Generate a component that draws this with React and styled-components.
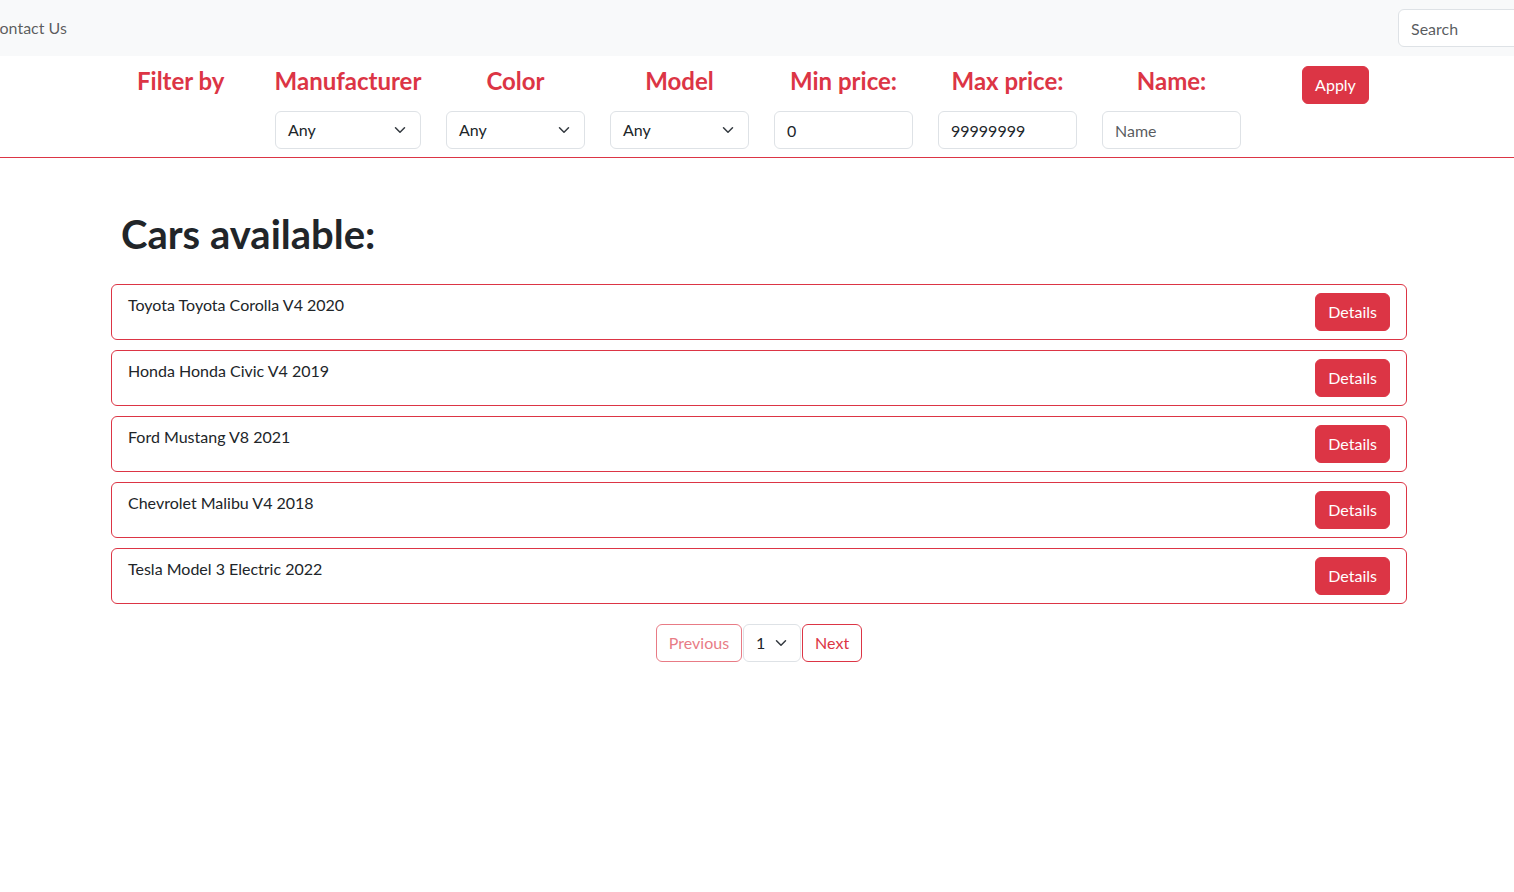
import React from "react";
import styled, { createGlobalStyle } from "styled-components";

const GlobalStyle = createGlobalStyle`
  * {
    box-sizing: border-box;
  }

  body {
    margin: 0;
    overflow: hidden;
    background: #ffffff;
    color: #212529;
    font-family: Lato, "Liberation Sans", sans-serif;
    font-size: 16px;
    line-height: 1.5;
  }
`;

const red = "#dc3545";

const NavBar = styled.nav`
  display: flex;
  align-items: center;
  justify-content: space-between;

  height: 56px;

  background: #f8f9fa;
`;

const NavLink = styled.a`
  margin-left: -11px;

  color: rgba(0, 0, 0, 0.65);
  font-size: 16px;
  text-decoration: none;
`;

const SearchInput = styled.input`
  width: 220px;
  height: 38px;
  margin-right: -104px;
  padding: 6px 12px;

  color: #212529;
  font: inherit;

  border: 1px solid #dee2e6;
  border-radius: 6px;
  background: #ffffff;

  &::placeholder {
    color: rgba(33, 37, 41, 0.75);
  }
`;

const FilterBar = styled.form`
  display: flex;
  align-items: flex-start;
  gap: 25px;

  padding: 10px 0 8px 137px;

  border-bottom: 1px solid ${red};
`;

const FilterColumn = styled.div`
  display: flex;
  flex-direction: column;
  align-items: ${({ $align }) => $align || "center"};
  gap: 16px;

  width: ${({ $width }) => $width}px;
`;

const FilterLabel = styled.h4`
  margin: 0;

  color: ${red};
  font-size: 24px;
  font-weight: 700;
  line-height: 29px;
  white-space: nowrap;
`;

const SelectBox = styled.div`
  display: flex;
  align-items: center;
  justify-content: space-between;

  width: 100%;
  height: 38px;
  padding: 0 12px;

  color: #212529;
  font-size: 16px;

  border: 1px solid #dee2e6;
  border-radius: 6px;
  background: #ffffff;

  svg {
    flex: 0 0 auto;
    width: 16px;
    height: 12px;
  }
`;

const TextInput = styled.input`
  width: 100%;
  height: 38px;
  padding: 6px 12px;

  color: #212529;
  font: inherit;

  border: 1px solid #dee2e6;
  border-radius: 6px;
  background: #ffffff;

  &::placeholder {
    color: rgba(33, 37, 41, 0.75);
  }
`;

const SolidButton = styled.button`
  height: 38px;
  padding: 0 12px;

  color: #ffffff;
  font: inherit;
  font-size: 16px;

  border: 1px solid ${red};
  border-radius: 6px;
  background: ${red};
  cursor: pointer;
`;

const Main = styled.main`
  width: 1296px;
  margin-left: 111px;
  padding-top: 52px;
`;

const PageTitle = styled.h1`
  margin: 0 0 26px 10px;

  color: #212529;
  font-size: 40px;
  font-weight: 700;
  line-height: 48px;
`;

const CarList = styled.div`
  display: grid;
  gap: 10px;
`;

const CarCard = styled.div`
  display: flex;
  align-items: flex-start;
  justify-content: space-between;

  height: 56px;
  padding: 8px 16px;

  border: 1px solid ${red};
  border-radius: 6px;
`;

const CarName = styled.span`
  color: #212529;
  font-size: 16px;
  line-height: 24px;
`;

const Pagination = styled.div`
  display: flex;
  justify-content: center;

  margin-top: 20px;
`;

const OutlineButton = styled.button`
  height: 38px;
  padding: 0 12px;

  color: ${red};
  font: inherit;
  font-size: 16px;

  border: 1px solid ${red};
  border-radius: 6px;
  background: transparent;
  opacity: ${({ disabled }) => (disabled ? 0.65 : 1)};
`;

const PageSelect = styled(SelectBox)`
  width: 58px;
  gap: 8px;
  margin: 0 1px;
`;

const Chevron = () => (
  <svg viewBox="0 0 16 16" aria-hidden="true">
    <path
      d="M2 5l6 6 6-6"
      fill="none"
      stroke="#343a40"
      strokeWidth="2"
      strokeLinecap="round"
      strokeLinejoin="round"
    />
  </svg>
);

const filters = [
  { label: "Manufacturer", width: 146, type: "select", value: "Any" },
  { label: "Color", width: 139, type: "select", value: "Any" },
  { label: "Model", width: 139, type: "select", value: "Any" },
  { label: "Min price:", width: 139, type: "input", value: "0" },
  { label: "Max price:", width: 139, type: "input", value: "99999999" },
  { label: "Name:", width: 139, type: "input", placeholder: "Name" },
];

const cars = [
  "Toyota Toyota Corolla V4 2020",
  "Honda Honda Civic V4 2019",
  "Ford Mustang V8 2021",
  "Chevrolet Malibu V4 2018",
  "Tesla Model 3 Electric 2022",
];

export default function App() {
  return (
    <>
      <GlobalStyle />

      <NavBar>
        <NavLink href="#">Contact Us</NavLink>
        <SearchInput type="search" placeholder="Search" />
      </NavBar>

      <FilterBar onSubmit={(e) => e.preventDefault()}>
        <FilterColumn $width={113} $align="flex-start">
          <FilterLabel>Filter by</FilterLabel>
        </FilterColumn>

        {filters.map((filter) => (
          <FilterColumn key={filter.label} $width={filter.width}>
            <FilterLabel>{filter.label}</FilterLabel>
            {filter.type === "select" ? (
              <SelectBox>
                <span>{filter.value}</span>
                <Chevron />
              </SelectBox>
            ) : (
              <TextInput
                defaultValue={filter.value}
                placeholder={filter.placeholder}
              />
            )}
          </FilterColumn>
        ))}

        <FilterColumn $width={139}>
          <SolidButton type="submit">Apply</SolidButton>
        </FilterColumn>
      </FilterBar>

      <Main>
        <PageTitle>Cars available:</PageTitle>

        <CarList>
          {cars.map((car) => (
            <CarCard key={car}>
              <CarName>{car}</CarName>
              <SolidButton type="button">Details</SolidButton>
            </CarCard>
          ))}
        </CarList>

        <Pagination>
          <OutlineButton type="button" disabled>
            Previous
          </OutlineButton>
          <PageSelect>
            <span>1</span>
            <Chevron />
          </PageSelect>
          <OutlineButton type="button">Next</OutlineButton>
        </Pagination>
      </Main>
    </>
  );
}
